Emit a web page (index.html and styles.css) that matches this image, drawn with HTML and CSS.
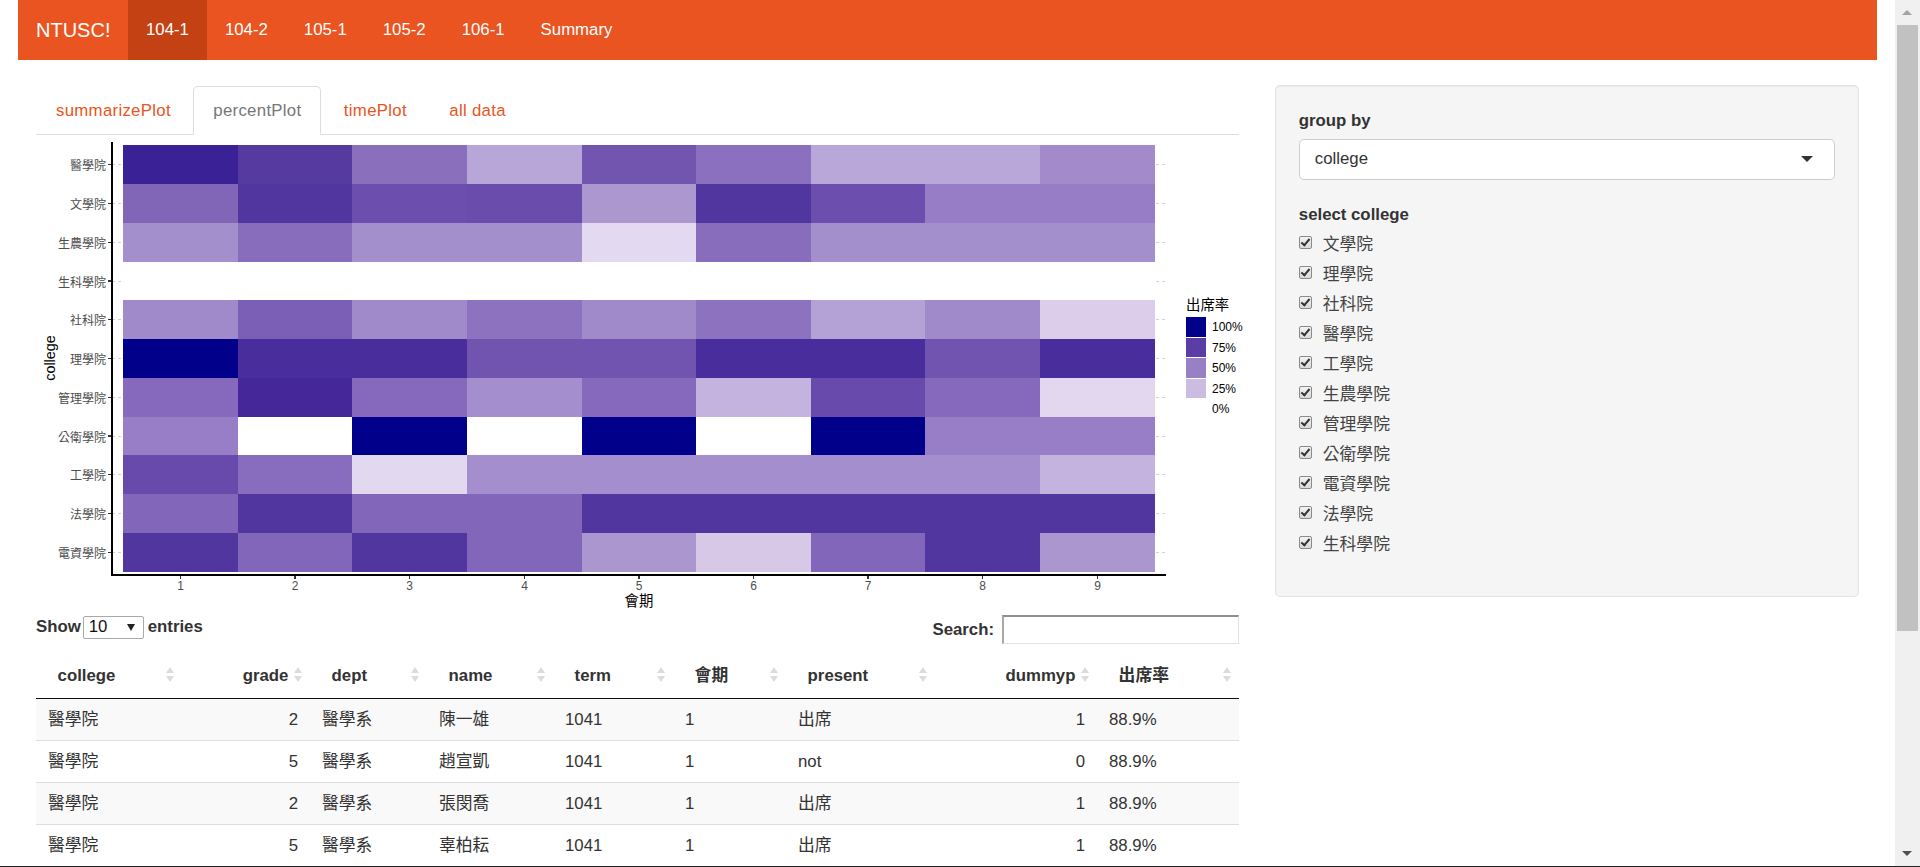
FILE: index.html
```html
<!DOCTYPE html>
<html lang="zh-Hant">
<head>
<meta charset="utf-8">
<title>NTUSC!</title>
<link rel="stylesheet" href="styles.css">
</head>
<body>
<div class="page">
  <nav class="navbar">
    <span class="brand">NTUSC!</span>
    <ul class="navlinks">
      <li class="active"><a href="#">104-1</a></li>
      <li><a href="#">104-2</a></li>
      <li><a href="#">105-1</a></li>
      <li><a href="#">105-2</a></li>
      <li><a href="#">106-1</a></li>
      <li><a href="#">Summary</a></li>
    </ul>
  </nav>

  <div class="layout">
    <div class="main">
      <ul class="tabs">
        <li><a href="#">summarizePlot</a></li>
        <li class="active"><a href="#">percentPlot</a></li>
        <li><a href="#">timePlot</a></li>
        <li><a href="#">all data</a></li>
      </ul>

      <svg class="plot" width="1203" height="480" viewBox="0 0 1203 480" shape-rendering="crispEdges">
        <g class="grid">
          <line x1="76" x2="1130" y1="29.5" y2="29.5"/>
          <line x1="76" x2="1130" y1="68.5" y2="68.5"/>
          <line x1="76" x2="1130" y1="107.5" y2="107.5"/>
          <line x1="76" x2="1130" y1="146" y2="146"/>
          <line x1="76" x2="1130" y1="184.5" y2="184.5"/>
          <line x1="76" x2="1130" y1="223.5" y2="223.5"/>
          <line x1="76" x2="1130" y1="262.5" y2="262.5"/>
          <line x1="76" x2="1130" y1="301" y2="301"/>
          <line x1="76" x2="1130" y1="339.5" y2="339.5"/>
          <line x1="76" x2="1130" y1="378.5" y2="378.5"/>
          <line x1="76" x2="1130" y1="417.5" y2="417.5"/>
        </g>
        <!-- 醫學院 -->
        <g transform="translate(0,10)">
          <rect x="87" width="115" height="39" fill="#3A2196"/>
          <rect x="202" width="114" height="39" fill="#563AA0"/>
          <rect x="316" width="115" height="39" fill="#8A6FBD"/>
          <rect x="431" width="115" height="39" fill="#B8A6D9"/>
          <rect x="546" width="114" height="39" fill="#7255AF"/>
          <rect x="660" width="115" height="39" fill="#8A70BE"/>
          <rect x="775" width="114" height="39" fill="#B9A7DA"/>
          <rect x="889" width="115" height="39" fill="#B9A7DA"/>
          <rect x="1004" width="115" height="39" fill="#A38BCB"/>
        </g>
        <!-- 文學院 -->
        <g transform="translate(0,49)">
          <rect x="87" width="115" height="39" fill="#8166B8"/>
          <rect x="202" width="114" height="39" fill="#5236A0"/>
          <rect x="316" width="115" height="39" fill="#6B4EAD"/>
          <rect x="431" width="115" height="39" fill="#6A4CAC"/>
          <rect x="546" width="114" height="39" fill="#AC97CE"/>
          <rect x="660" width="115" height="39" fill="#5236A0"/>
          <rect x="775" width="114" height="39" fill="#6B4EAD"/>
          <rect x="889" width="115" height="39" fill="#967DC5"/>
          <rect x="1004" width="115" height="39" fill="#967DC5"/>
        </g>
        <!-- 生農學院 -->
        <g transform="translate(0,88)">
          <rect x="87" width="115" height="39" fill="#A48FCD"/>
          <rect x="202" width="114" height="39" fill="#886DBD"/>
          <rect x="316" width="115" height="39" fill="#A48FCD"/>
          <rect x="431" width="115" height="39" fill="#A48FCD"/>
          <rect x="546" width="114" height="39" fill="#E3D9F0"/>
          <rect x="660" width="115" height="39" fill="#886DBD"/>
          <rect x="775" width="114" height="39" fill="#A48FCD"/>
          <rect x="889" width="115" height="39" fill="#A48FCD"/>
          <rect x="1004" width="115" height="39" fill="#A48FCD"/>
        </g>
        <!-- 生科學院 -->
        <rect x="87" y="127" width="1032" height="38" fill="#ffffff"/>
        <!-- 社科院 -->
        <g transform="translate(0,165)">
          <rect x="87" width="115" height="39" fill="#A18AC9"/>
          <rect x="202" width="114" height="39" fill="#7B5EB5"/>
          <rect x="316" width="115" height="39" fill="#A18AC9"/>
          <rect x="431" width="115" height="39" fill="#8C72BF"/>
          <rect x="546" width="114" height="39" fill="#A18AC9"/>
          <rect x="660" width="115" height="39" fill="#8C72BF"/>
          <rect x="775" width="114" height="39" fill="#B4A2D7"/>
          <rect x="889" width="115" height="39" fill="#A18AC9"/>
          <rect x="1004" width="115" height="39" fill="#DCCEEA"/>
        </g>
        <!-- 理學院 -->
        <g transform="translate(0,204)">
          <rect x="87" width="115" height="39" fill="#00008B"/>
          <rect x="202" width="114" height="39" fill="#4A2D9C"/>
          <rect x="316" width="115" height="39" fill="#4A2D9C"/>
          <rect x="431" width="115" height="39" fill="#7154AF"/>
          <rect x="546" width="114" height="39" fill="#7154AF"/>
          <rect x="660" width="115" height="39" fill="#4A2D9C"/>
          <rect x="775" width="114" height="39" fill="#4A2D9C"/>
          <rect x="889" width="115" height="39" fill="#7154AF"/>
          <rect x="1004" width="115" height="39" fill="#4A2D9C"/>
        </g>
        <!-- 管理學院 -->
        <g transform="translate(0,243)">
          <rect x="87" width="115" height="39" fill="#8669BD"/>
          <rect x="202" width="114" height="39" fill="#45279A"/>
          <rect x="316" width="115" height="39" fill="#8669BD"/>
          <rect x="431" width="115" height="39" fill="#A48ECD"/>
          <rect x="546" width="114" height="39" fill="#8669BD"/>
          <rect x="660" width="115" height="39" fill="#C4B3DE"/>
          <rect x="775" width="114" height="39" fill="#674AAC"/>
          <rect x="889" width="115" height="39" fill="#8669BD"/>
          <rect x="1004" width="115" height="39" fill="#E2D7EF"/>
        </g>
        <!-- 公衛學院 -->
        <g transform="translate(0,282)">
          <rect x="87" width="115" height="38" fill="#977EC6"/>
          <rect x="202" width="114" height="38" fill="#ffffff"/>
          <rect x="316" width="115" height="38" fill="#00008B"/>
          <rect x="431" width="115" height="38" fill="#ffffff"/>
          <rect x="546" width="114" height="38" fill="#00008B"/>
          <rect x="660" width="115" height="38" fill="#ffffff"/>
          <rect x="775" width="114" height="38" fill="#00008B"/>
          <rect x="889" width="115" height="38" fill="#977EC6"/>
          <rect x="1004" width="115" height="38" fill="#977EC6"/>
        </g>
        <!-- 工學院 -->
        <g transform="translate(0,320)">
          <rect x="87" width="115" height="39" fill="#674AAC"/>
          <rect x="202" width="114" height="39" fill="#886CBD"/>
          <rect x="316" width="115" height="39" fill="#E2D9F0"/>
          <rect x="431" width="115" height="39" fill="#A48ECD"/>
          <rect x="546" width="114" height="39" fill="#A48ECD"/>
          <rect x="660" width="115" height="39" fill="#A48ECD"/>
          <rect x="775" width="114" height="39" fill="#A48ECD"/>
          <rect x="889" width="115" height="39" fill="#A48ECD"/>
          <rect x="1004" width="115" height="39" fill="#C4B3DE"/>
        </g>
        <!-- 法學院 -->
        <g transform="translate(0,359)">
          <rect x="87" width="115" height="39" fill="#8166B9"/>
          <rect x="202" width="114" height="39" fill="#5236A0"/>
          <rect x="316" width="115" height="39" fill="#8166B9"/>
          <rect x="431" width="115" height="39" fill="#8166B9"/>
          <rect x="546" width="573" height="39" fill="#5236A0"/>
        </g>
        <!-- 電資學院 -->
        <g transform="translate(0,398)">
          <rect x="87" width="115" height="39" fill="#5236A0"/>
          <rect x="202" width="114" height="39" fill="#8166B9"/>
          <rect x="316" width="115" height="39" fill="#5236A0"/>
          <rect x="431" width="115" height="39" fill="#8166B9"/>
          <rect x="546" width="114" height="39" fill="#AB96CF"/>
          <rect x="660" width="115" height="39" fill="#D7C8E8"/>
          <rect x="775" width="114" height="39" fill="#8166B9"/>
          <rect x="889" width="115" height="39" fill="#5236A0"/>
          <rect x="1004" width="115" height="39" fill="#AB96CF"/>
        </g>

        <g class="ticks">
          <line x1="72" x2="76" y1="29.5" y2="29.5"/>
          <line x1="72" x2="76" y1="68.5" y2="68.5"/>
          <line x1="72" x2="76" y1="107.5" y2="107.5"/>
          <line x1="72" x2="76" y1="146" y2="146"/>
          <line x1="72" x2="76" y1="184.5" y2="184.5"/>
          <line x1="72" x2="76" y1="223.5" y2="223.5"/>
          <line x1="72" x2="76" y1="262.5" y2="262.5"/>
          <line x1="72" x2="76" y1="301" y2="301"/>
          <line x1="72" x2="76" y1="339.5" y2="339.5"/>
          <line x1="72" x2="76" y1="378.5" y2="378.5"/>
          <line x1="72" x2="76" y1="417.5" y2="417.5"/>
          <line x1="144.5" x2="144.5" y1="440" y2="444"/>
          <line x1="259" x2="259" y1="440" y2="444"/>
          <line x1="373.5" x2="373.5" y1="440" y2="444"/>
          <line x1="488.5" x2="488.5" y1="440" y2="444"/>
          <line x1="603" x2="603" y1="440" y2="444"/>
          <line x1="717.5" x2="717.5" y1="440" y2="444"/>
          <line x1="832" x2="832" y1="440" y2="444"/>
          <line x1="946.5" x2="946.5" y1="440" y2="444"/>
          <line x1="1061.5" x2="1061.5" y1="440" y2="444"/>
        </g>
        <g class="axis">
          <line x1="76" x2="76" y1="7" y2="441"/>
          <line x1="75" x2="1130" y1="440" y2="440"/>
        </g>

        <g class="ylab">
          <text x="70" y="29.5">醫學院</text>
          <text x="70" y="68.5">文學院</text>
          <text x="70" y="107.5">生農學院</text>
          <text x="70" y="146">生科學院</text>
          <text x="70" y="184.5">社科院</text>
          <text x="70" y="223.5">理學院</text>
          <text x="70" y="262.5">管理學院</text>
          <text x="70" y="301">公衛學院</text>
          <text x="70" y="339.5">工學院</text>
          <text x="70" y="378.5">法學院</text>
          <text x="70" y="417.5">電資學院</text>
        </g>
        <g class="xlab">
          <text x="144.5" y="451">1</text>
          <text x="259" y="451">2</text>
          <text x="373.5" y="451">3</text>
          <text x="488.5" y="451">4</text>
          <text x="603" y="451">5</text>
          <text x="717.5" y="451">6</text>
          <text x="832" y="451">7</text>
          <text x="946.5" y="451">8</text>
          <text x="1061.5" y="451">9</text>
        </g>
        <text class="axtitle xt" x="603" y="466">會期</text>
        <text class="axtitle yt" transform="translate(14,223) rotate(-90)">college</text>

        <g class="legend">
          <text class="legtitle" x="1150" y="168">出席率</text>
          <rect x="1150" y="182" width="20" height="19.5" fill="#00008B"/>
          <rect x="1150" y="202.5" width="20" height="19.5" fill="#5B3DA6"/>
          <rect x="1150" y="223" width="20" height="19.5" fill="#9880C6"/>
          <rect x="1150" y="243.5" width="20" height="19.5" fill="#CBBCE2"/>
          <rect x="1150" y="264" width="20" height="19.5" fill="#ffffff"/>
          <text class="legtext" x="1176" y="192">100%</text>
          <text class="legtext" x="1176" y="213">75%</text>
          <text class="legtext" x="1176" y="233">50%</text>
          <text class="legtext" x="1176" y="254">25%</text>
          <text class="legtext" x="1176" y="274">0%</text>
        </g>
      </svg>

      <div class="dt-top">
        <label class="dt-length">Show <span class="len-select">10<span class="len-caret"></span></span> entries</label>
        <label class="dt-search">Search:<span class="search-input"></span></label>
      </div>

      <table class="dt">
        <colgroup>
          <col style="width:146px"><col style="width:128px"><col style="width:117px">
          <col style="width:126px"><col style="width:120px"><col style="width:113px">
          <col style="width:149px"><col style="width:162px"><col style="width:142px">
        </colgroup>
        <thead>
          <tr>
            <th>college<span class="sort"></span></th>
            <th class="num">grade<span class="sort"></span></th>
            <th>dept<span class="sort"></span></th>
            <th>name<span class="sort"></span></th>
            <th>term<span class="sort"></span></th>
            <th>會期<span class="sort"></span></th>
            <th>present<span class="sort"></span></th>
            <th class="num">dummyp<span class="sort"></span></th>
            <th>出席率<span class="sort"></span></th>
          </tr>
        </thead>
        <tbody>
          <tr><td>醫學院</td><td class="num">2</td><td>醫學系</td><td>陳一雄</td><td>1041</td><td>1</td><td>出席</td><td class="num">1</td><td>88.9%</td></tr>
          <tr><td>醫學院</td><td class="num">5</td><td>醫學系</td><td>趙宣凱</td><td>1041</td><td>1</td><td>not</td><td class="num">0</td><td>88.9%</td></tr>
          <tr><td>醫學院</td><td class="num">2</td><td>醫學系</td><td>張閔喬</td><td>1041</td><td>1</td><td>出席</td><td class="num">1</td><td>88.9%</td></tr>
          <tr><td>醫學院</td><td class="num">5</td><td>醫學系</td><td>辜柏耘</td><td>1041</td><td>1</td><td>出席</td><td class="num">1</td><td>88.9%</td></tr>
        </tbody>
      </table>
    </div>

    <aside class="side">
      <div class="well">
        <label class="lbl">group by</label>
        <div class="sel"><span>college</span><span class="sel-caret"></span></div>
        <label class="lbl lbl-second">select college</label>
        <div class="cb-list">
          <div class="cb"><span class="box"></span>文學院</div>
          <div class="cb"><span class="box"></span>理學院</div>
          <div class="cb"><span class="box"></span>社科院</div>
          <div class="cb"><span class="box"></span>醫學院</div>
          <div class="cb"><span class="box"></span>工學院</div>
          <div class="cb"><span class="box"></span>生農學院</div>
          <div class="cb"><span class="box"></span>管理學院</div>
          <div class="cb"><span class="box"></span>公衛學院</div>
          <div class="cb"><span class="box"></span>電資學院</div>
          <div class="cb"><span class="box"></span>法學院</div>
          <div class="cb"><span class="box"></span>生科學院</div>
        </div>
      </div>
    </aside>
  </div>
</div>

<div class="scrollbar">
  <span class="sb-up"></span>
  <span class="sb-thumb"></span>
  <span class="sb-down"></span>
</div>
<div class="window-edge"></div>
</body>
</html>
```

FILE: styles.css
```css
html, body {
  margin: 0;
  padding: 0;
  height: 867px;
  overflow: hidden;
  background: #fff;
}

body {
  width: 1895px;
  font-family: "Liberation Sans", "Noto Sans CJK TC", sans-serif;
  font-size: 16.8px;
  line-height: 24px;
  color: #333;
}

.page {
  padding: 0 18px;
}

/* ---------- navbar ---------- */
.navbar {
  display: flex;
  height: 60px;
  background: #e95420;
  margin-bottom: 26px;
}

.brand {
  box-sizing: border-box;
  width: 110px;
  padding: 0 18px;
  line-height: 60px;
  font-size: 20px;
  color: #fff;
  white-space: nowrap;
}

.navlinks {
  display: flex;
  list-style: none;
  margin: 0;
  padding: 0;
}

.navlinks a {
  display: block;
  padding: 0 18px;
  line-height: 60px;
  color: #fff;
  text-decoration: none;
}

.navlinks .active a {
  background: #c34113;
}

/* ---------- layout ---------- */
.layout {
  display: flex;
  gap: 36px;
  padding: 0 18px;
  align-items: flex-start;
}

.main {
  width: 1203px;
  flex: none;
}

.side {
  width: 584px;
  flex: none;
  margin-top: -1px;
}

/* ---------- tabs ---------- */
.tabs {
  display: flex;
  list-style: none;
  margin: 0;
  padding: 0;
  border-bottom: 1px solid #ddd;
}

.tabs li {
  margin-right: 2.4px;
  margin-bottom: -1px;
}

.tabs a {
  display: block;
  padding: 11.5px 19px;
  line-height: 24px;
  letter-spacing: 0.3px;
  border: 1px solid transparent;
  border-radius: 4.8px 4.8px 0 0;
  color: #e95420;
  text-decoration: none;
}

.tabs .active a {
  color: #777;
  background: #fff;
  border-color: #ddd #ddd transparent;
}

/* ---------- plot ---------- */
.plot {
  display: block;
  overflow: visible;
}

.grid line {
  stroke: #d2d2d2;
  stroke-width: 1;
  stroke-dasharray: 3 3;
}

.ticks line {
  stroke: #333;
  stroke-width: 1.2;
}

.axis line {
  stroke: #000;
  stroke-width: 1.6;
}

.ylab text {
  font-family: "Noto Sans CJK TC", sans-serif;
  font-size: 12px;
  fill: #4d4d4d;
  text-anchor: end;
  dominant-baseline: central;
}

.xlab text {
  font-family: "Liberation Sans", sans-serif;
  font-size: 12px;
  fill: #4d4d4d;
  text-anchor: middle;
  dominant-baseline: central;
}

.axtitle {
  font-family: "Liberation Sans", "Noto Sans CJK TC", sans-serif;
  font-size: 14.4px;
  font-weight: normal;
  fill: #000;
  text-anchor: middle;
  dominant-baseline: central;
}

.legtitle {
  font-family: "Noto Sans CJK TC", sans-serif;
  font-size: 14.4px;
  fill: #000;
  dominant-baseline: central;
}

.legtext {
  font-family: "Liberation Sans", sans-serif;
  font-size: 12px;
  fill: #000;
  dominant-baseline: central;
}

/* ---------- datatable controls ---------- */
.dt-top {
  display: flex;
  justify-content: space-between;
  align-items: center;
  height: 29px;
}

.dt-length,
.dt-search {
  display: flex;
  align-items: center;
  font-weight: bold;
}

.dt-length {
  align-self: flex-start;
}

.len-select {
  box-sizing: border-box;
  display: inline-flex;
  align-items: center;
  justify-content: space-between;
  width: 61px;
  height: 23px;
  margin: 0 4px 0 2px;
  padding: 0 8px 0 5px;
  border: 1px solid #a9a9a9;
  border-radius: 2px;
  background: #fff;
  font-weight: normal;
  color: #111;
}

.len-caret {
  width: 0;
  height: 0;
  border-left: 4px solid transparent;
  border-right: 4px solid transparent;
  border-top: 7px solid #222;
}

.search-input {
  box-sizing: border-box;
  display: block;
  width: 237px;
  height: 29px;
  margin-left: 8px;
  background: #fff;
  border-top: 2px solid #8f8f8f;
  border-left: 2px solid #a8a8a8;
  border-right: 1px solid #e2e2e2;
  border-bottom: 1px solid #e2e2e2;
}

/* ---------- datatable ---------- */
.dt {
  width: 1203px;
  margin-top: 6px;
  border-collapse: collapse;
  table-layout: fixed;
}

.dt th {
  position: relative;
  padding: 14px 21.6px 10px;
  line-height: 24px;
  text-align: left;
  font-weight: bold;
  border-bottom: 1px solid #111;
  white-space: nowrap;
}

.dt th.num,
.dt td.num {
  text-align: right;
}

.sort {
  position: absolute;
  right: 8px;
  top: 50%;
  width: 8px;
  height: 15px;
  margin-top: -7px;
}

.sort::before,
.sort::after {
  content: "";
  position: absolute;
  left: 0;
  width: 0;
  height: 0;
  border-left: 4px solid transparent;
  border-right: 4px solid transparent;
}

.sort::before {
  top: 0;
  border-bottom: 6px solid #dcdcdc;
}

.sort::after {
  bottom: 0;
  border-top: 6px solid #dcdcdc;
}

.dt td {
  padding: 9px 12px;
  line-height: 23px;
  border-top: 1px solid #ddd;
  white-space: nowrap;
}

.dt tbody tr:first-child td {
  border-top: none;
}

.dt tbody tr:nth-child(odd) {
  background: #f9f9f9;
}

/* ---------- sidebar well ---------- */
.well {
  background: #f5f5f5;
  border: 1px solid #e3e3e3;
  border-radius: 4.8px;
  padding: 22.8px;
  box-shadow: inset 0 1px 1px rgba(0, 0, 0, 0.05);
}

.lbl {
  display: block;
  font-weight: bold;
  line-height: 24px;
  margin-bottom: 6px;
}

.lbl-second {
  margin-top: 23.2px;
  margin-bottom: 4px;
}

.sel {
  box-sizing: border-box;
  display: flex;
  align-items: center;
  justify-content: space-between;
  height: 41px;
  padding: 0 21px 0 15px;
  background: #fff;
  border: 1px solid #ccc;
  border-radius: 4.8px;
}

.sel-caret {
  width: 0;
  height: 0;
  border-left: 6px solid transparent;
  border-right: 6px solid transparent;
  border-top: 6px solid #333;
}

.cb-list {
  display: flex;
  flex-direction: column;
  gap: 6px;
  margin-bottom: 18px;
}

.cb {
  display: flex;
  align-items: center;
  height: 24px;
  font-family: "Noto Sans CJK TC", sans-serif;
  color: #444;
}

.box {
  position: relative;
  box-sizing: border-box;
  width: 13px;
  height: 13px;
  margin-right: 11px;
  border: 1px solid #8a8a8a;
  border-radius: 2px;
  background: linear-gradient(#f4f4f4, #d9d9d9);
}

.box::after {
  content: "";
  position: absolute;
  left: 3px;
  top: 0px;
  width: 3px;
  height: 7px;
  border-right: 2px solid #333;
  border-bottom: 2px solid #333;
  transform: rotate(40deg);
}

/* ---------- fake window scrollbar ---------- */
.scrollbar {
  position: fixed;
  top: 0;
  right: 0;
  width: 25px;
  height: 867px;
  background: #f0f0f0;
}

.sb-thumb {
  position: absolute;
  left: 2px;
  width: 21px;
  top: 25px;
  height: 606px;
  background: #c1c1c1;
}

.sb-up,
.sb-down {
  position: absolute;
  left: 7px;
  width: 0;
  height: 0;
  border-left: 5.5px solid transparent;
  border-right: 5.5px solid transparent;
}

.sb-up {
  top: 10px;
  border-bottom: 5px solid #a3a3a3;
}

.sb-down {
  top: 851px;
  border-top: 5px solid #505050;
}

.window-edge {
  position: fixed;
  left: 0;
  right: 0;
  bottom: 0;
  height: 1px;
  background: #222;
}
```
